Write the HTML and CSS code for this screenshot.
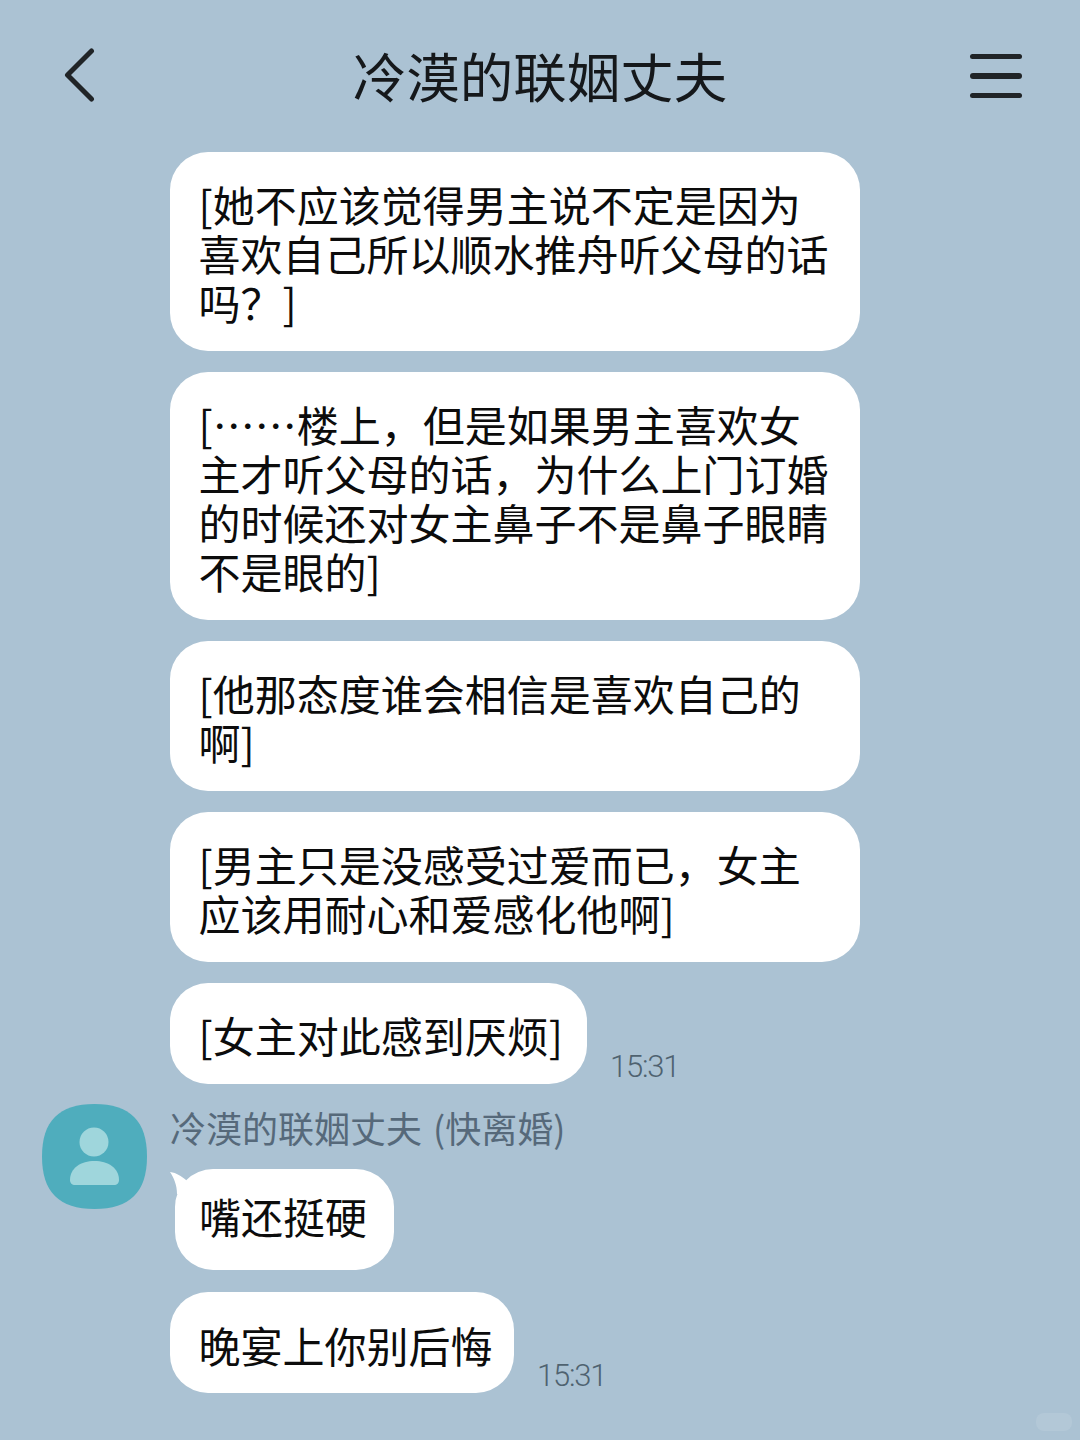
FILE: index.html
```html
<!DOCTYPE html>
<html lang="zh-CN">
<head>
<meta charset="utf-8">
<title>冷漠的联姻丈夫</title>
<link rel="stylesheet" href="styles.css">
</head>
<body>
<div class="screen">
  <header class="topbar">
    <svg class="back" width="32" height="56" viewBox="0 0 32 56"><path d="M27.5 3 L3.5 27 L27.5 51" fill="none" stroke="#202427" stroke-width="5" stroke-linecap="round" stroke-linejoin="round"/></svg>
    <h1 class="title">冷漠的联姻丈夫</h1>
    <div class="menu"><span></span><span></span><span></span></div>
  </header>
  <main class="thread">
    <div class="row"><p class="bubble wide">[她不应该觉得男主说不定是因为喜欢自己所以顺水推舟听父母的话吗？]</p></div>
    <div class="row"><p class="bubble wide">[……楼上，但是如果男主喜欢女主才听父母的话，为什么上门订婚的时候还对女主鼻子不是鼻子眼睛不是眼的]</p></div>
    <div class="row"><p class="bubble wide">[他那态度谁会相信是喜欢自己的啊]</p></div>
    <div class="row"><p class="bubble wide">[男主只是没感受过爱而已，女主应该用耐心和爱感化他啊]</p></div>
    <div class="row"><p class="bubble">[女主对此感到厌烦]</p><time class="time">15:31</time></div>
    <section class="group">
      <svg class="avatar" width="105" height="105" viewBox="0 0 105 105">
        <path d="M52.5 0 C88 0 105 17 105 52.5 C105 88 88 105 52.5 105 C17 105 0 88 0 52.5 C0 17 17 0 52.5 0 Z" fill="#4fadbd"/>
        <circle cx="52" cy="38" r="14.5" fill="#9fd6dc"/>
        <path d="M28 76 C28 64 39 57 52.5 57 C66 57 77 64 77 76 C77 79 75 81 72 81 L33 81 C30 81 28 79 28 76 Z" fill="#9fd6dc"/>
      </svg>
      <div class="group-body">
        <div class="name">冷漠的联姻丈夫 (快离婚)</div>
        <div class="row tailed">
          <svg class="tail" width="24" height="24" viewBox="0 0 24 24"><path d="M0 2 C7 3 11 6 16 10 L20 24 L7 24 C7 15 4 8 0 2 Z" fill="#fff"/></svg>
          <p class="bubble tailed-bubble">嘴还挺硬</p>
        </div>
        <div class="row"><p class="bubble tight">晚宴上你别后悔</p><time class="time">15:31</time></div>
      </div>
    </section>
  </main>
  <div class="watermark"></div>
</div>
</body>
</html>
```
FILE: styles.css
```css
* { box-sizing: border-box; }
html, body { margin: 0; padding: 0; }
body {
  background: #abc2d3;
  font-family: "Noto Sans CJK SC", "Noto Sans", sans-serif;
  color: #111;
}
.screen {
  position: relative;
  width: 1080px;
  height: 1440px;
  overflow: hidden;
  background: #abc2d3;
}
.topbar {
  display: flex;
  align-items: center;
  justify-content: space-between;
  height: 152px;
  padding: 0 58px 0 64px;
  position: relative;
}
.back { margin-top: 0; flex: none; }
.title {
  position: absolute;
  left: 0;
  right: 0;
  top: 37px;
  margin: 0;
  text-align: center;
  font-size: 53.5px;
  line-height: 76px;
  font-weight: 400;
  color: #15181b;
}
.menu {
  display: flex;
  flex-direction: column;
  gap: 14px;
  width: 52px;
  margin-top: 0;
}
.menu span {
  display: block;
  height: 5.5px;
  border-radius: 3px;
  background: #202427;
}
.thread {
  display: flex;
  flex-direction: column;
  gap: 21px;
  padding-left: 42px;
}
.row {
  display: flex;
  align-items: flex-end;
  gap: 23px;
  margin-left: 128px;
  position: relative;
}
.bubble {
  margin: 0;
  padding: 27px 24px 25px 28.5px;
  background: #fff;
  border-radius: 38px;
  font-size: 42px;
  line-height: 49px;
  color: #0c0c0c;
}
.wide { width: 690px; }
.tight { padding: 28px 21.5px 24px 28.5px; }
.tailed-bubble { padding: 22px 27px 30px 24px; }
.time {
  font-family: "Roboto", sans-serif;
  font-size: 31px;
  font-weight: 300;
  letter-spacing: -1.2px;
  line-height: 34px;
  color: #4f6270;
  margin-bottom: 0;
}
.group {
  display: flex;
  gap: 23px;
  margin-top: -1px;
}
.avatar { flex: none; }
.group-body {
  display: flex;
  flex-direction: column;
  gap: 22px;
}
.group-body .row { margin-left: 0; }
.name {
  font-size: 36px;
  line-height: 46px;
  color: #56697a;
  margin-top: 0;
  margin-bottom: -3px;
  word-spacing: 3px;
}
.tailed { padding-left: 5px; }
.tail {
  position: absolute;
  left: 0;
  top: 1px;
}
.watermark {
  position: absolute;
  left: 1036px;
  top: 1413px;
  width: 36px;
  height: 18px;
  border-radius: 8px;
  background: rgba(255, 255, 255, 0.1);
}
```
